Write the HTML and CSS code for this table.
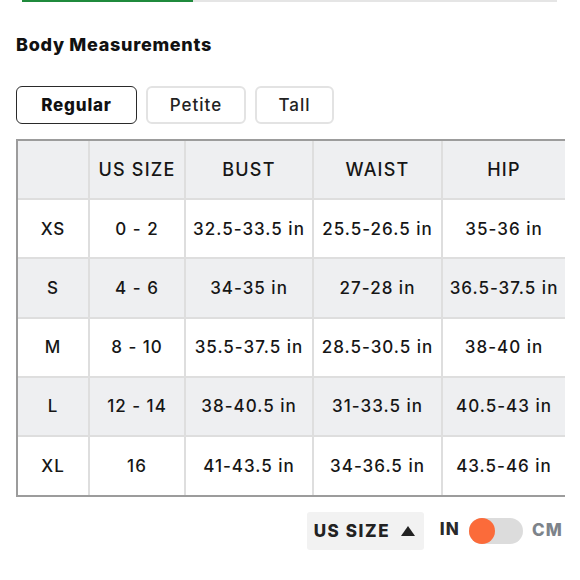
FILE: index.html
```html
<!DOCTYPE html>
<html lang="en">
<head>
<meta charset="utf-8">
<title>Body Measurements</title>
<link rel="stylesheet" href="styles.css">
</head>
<body>
<div class="tabs-line"><span class="tab-active"></span><span class="tab-rest"></span></div>
<main class="page">
  <h2 class="title">Body Measurements</h2>
  <div class="fits">
    <button class="fit fit-active">Regular</button>
    <button class="fit">Petite</button>
    <button class="fit">Tall</button>
  </div>
  <table class="chart">
    <colgroup>
      <col class="c1"><col class="c2"><col class="c3"><col class="c4"><col class="c5">
    </colgroup>
    <thead>
      <tr><th></th><th>US SIZE</th><th>BUST</th><th>WAIST</th><th>HIP</th></tr>
    </thead>
    <tbody>
      <tr><td>XS</td><td>0 - 2</td><td>32.5-33.5 in</td><td>25.5-26.5 in</td><td>35-36 in</td></tr>
      <tr class="alt"><td>S</td><td>4 - 6</td><td>34-35 in</td><td>27-28 in</td><td>36.5-37.5 in</td></tr>
      <tr><td>M</td><td>8 - 10</td><td>35.5-37.5 in</td><td>28.5-30.5 in</td><td>38-40 in</td></tr>
      <tr class="alt"><td>L</td><td>12 - 14</td><td>38-40.5 in</td><td>31-33.5 in</td><td>40.5-43 in</td></tr>
      <tr><td>XL</td><td>16</td><td>41-43.5 in</td><td>34-36.5 in</td><td>43.5-46 in</td></tr>
    </tbody>
  </table>
  <div class="controls">
    <button class="sort">US SIZE
      <svg class="tri" width="14" height="10" viewBox="0 0 14 10"><path d="M7 0 L14 10 L0 10 Z" fill="#222"/></svg>
    </button>
    <span class="unit unit-on">IN</span>
    <span class="toggle"><span class="knob"></span></span>
    <span class="unit unit-off">CM</span>
  </div>
</main>
</body>
</html>
```
FILE: styles.css
```css
* { box-sizing: border-box; }
html, body { margin: 0; padding: 0; background: #fff; }
body { font-family: "Inter", "Liberation Sans", sans-serif; color: #1a1a1a; width: 580px; height: 580px; overflow: hidden; }

.tabs-line { display: flex; padding-left: 22px; height: 2px; }
.tab-active { width: 171px; height: 2px; background: #1f8a3c; }
.tab-rest { width: 364px; height: 2px; background: #e5e5e5; }

.page { padding: 0 0 0 16px; }

.title {
  margin: 32px 0 0;
  font-family: "Inter", "Liberation Sans", sans-serif;
  font-weight: 800;
  font-size: 18px;
  letter-spacing: 0.7px;
  line-height: 22px;
  color: #111;
}

.fits { display: flex; gap: 9px; margin-top: 30px; }
.fit {
  height: 38px;
  border: 2px solid #e3e3e3;
  border-radius: 6px;
  background: #fff;
  font-family: "Inter", "Liberation Sans", sans-serif;
  font-size: 17px;
  font-weight: 500;
  letter-spacing: 1px;
  color: #222;
  padding: 0;
}
.fit:nth-child(1) { width: 121px; }
.fit:nth-child(2) { width: 100px; }
.fit:nth-child(3) { width: 79px; }
.fit-active { border-color: #2a2a2a; font-weight: 800; color: #111; border-width: 1.5px; letter-spacing: 0.8px; }

.chart {
  margin-top: 15px;
  border-collapse: separate;
  border-spacing: 0;
  border-top: 2px solid #9c9c9c;
  border-left: 2px solid #9c9c9c;
  border-bottom: 2px solid #9c9c9c;
  table-layout: fixed;
  width: 549px;
}
.c1 { width: 72px; }
.c2 { width: 96px; }
.c3 { width: 128px; }
.c4 { width: 129px; }
.c5 { width: 122px; }
.chart th, .chart td {
  height: 59.2px;
  padding: 0;
  text-align: center;
  font-size: 17px;
  font-weight: 500;
  letter-spacing: 1px;
  color: #161616;
  border-right: 2px solid #dedede;
  border-bottom: 2px solid #dedede;
  white-space: nowrap;
}
.chart th { font-size: 18px; letter-spacing: 1.2px; background: #eeeff1; }
.chart th:last-child, .chart td:last-child { border-right: none; }
.chart tbody tr:last-child td { border-bottom: none; height: 58px; }
.chart tr.alt td { background: #eeeff1; }

.controls { display: flex; align-items: center; justify-content: flex-end; width: 547px; margin-top: 15px; }
.sort {
  display: flex; align-items: center; gap: 11px;
  height: 38px; width: 117px;
  padding: 0 0 0 7px;
  border: none; border-radius: 3px;
  background: #f2f2f2;
  font-family: "Inter", "Liberation Sans", sans-serif;
  font-weight: 800; font-size: 17px; letter-spacing: 1.6px; color: #222;
}
.tri { display: block; }
.unit { font-family: "Inter", "Liberation Sans", sans-serif; font-weight: 800; font-size: 17px; letter-spacing: 1.2px; }
.unit-on { color: #2a2a2a; margin-left: 16px; margin-bottom: 4px; }
.unit-off { color: #7d838a; margin-left: 9px; margin-bottom: 2px; }
.toggle { position: relative; margin-left: 9px; width: 54px; height: 26px; border-radius: 13px; background: #dcdcdc; }
.knob { position: absolute; left: 0; top: 0; width: 26px; height: 26px; border-radius: 50%; background: #fb6b3a; }
```
